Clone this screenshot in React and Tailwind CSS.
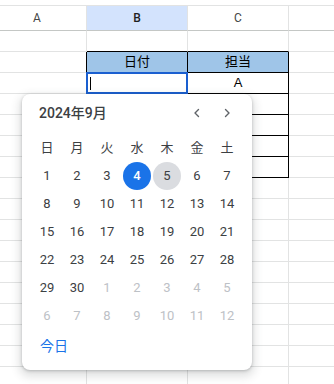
import React from 'react';

const ROWS = 17;
const weekdays = ['日', '月', '火', '水', '木', '金', '土'];
// September 2024, padded with Aug/Oct days
const days = [
  [1, 2, 3, 4, 5, 6, 7],
  [8, 9, 10, 11, 12, 13, 14],
  [15, 16, 17, 18, 19, 20, 21],
  [22, 23, 24, 25, 26, 27, 28],
  [29, 30, 1, 2, 3, 4, 5],
  [6, 7, 8, 9, 10, 11, 12],
];

function Chevron({ dir }) {
  return (
    <svg width="8" height="10" viewBox="0 0 8 10" fill="none">
      {dir === 'left' ? (
        <path d="M5.5 1.5 L2 5 L5.5 8.5" stroke="#5f6368" strokeWidth="1.4" strokeLinecap="round" strokeLinejoin="round" />
      ) : (
        <path d="M2.5 1.5 L6 5 L2.5 8.5" stroke="#5f6368" strokeWidth="1.4" strokeLinecap="round" strokeLinejoin="round" />
      )}
    </svg>
  );
}

function SheetRow({ r }) {
  const inTable = r >= 2 && r <= 7;
  const topEdge = r === 1;
  const tableB = inTable || topEdge;
  return (
    <div className="flex h-[21px]">
      <div className={`w-[87px] shrink-0 border-b border-r border-b-[#e2e3e3] ${inTable ? 'border-r-black' : 'border-r-[#e2e3e3]'}`} />
      <div
        className={`relative w-[101px] shrink-0 border-b border-r flex items-center justify-center ${tableB ? 'border-b-black' : 'border-b-[#e2e3e3]'} ${inTable ? 'border-r-black' : 'border-r-[#e2e3e3]'} ${r === 2 ? 'bg-[#9fc5e8]' : ''}`}
      >
        {r === 2 && <span>日付</span>}
        {r === 3 && (
          <>
            <div className="absolute -top-px -left-px w-[102px] h-[22px] border-2 border-[#1a5fd0]" />
            <div className="absolute left-[3px] top-[4px] w-px h-[13px] bg-black" />
          </>
        )}
      </div>
      <div
        className={`w-[101px] shrink-0 border-b border-r flex items-center justify-center ${tableB ? 'border-b-black' : 'border-b-[#e2e3e3]'} ${inTable ? 'border-r-black' : 'border-r-[#e2e3e3]'} ${r === 2 ? 'bg-[#9fc5e8]' : ''}`}
      >
        {r === 2 && <span>担当</span>}
        {r === 3 && <span>A</span>}
      </div>
      <div className="flex-1 border-b border-b-[#e2e3e3]" />
    </div>
  );
}

export default function App() {
  return (
    <div className="relative w-[334px] h-[384px] overflow-hidden bg-white text-[13px] text-black" style={{ fontFamily: '"Liberation Sans", "Noto Sans CJK JP", sans-serif' }}>
      {/* strip above column headers */}
      <div className="h-[6px] border-b border-[#e2e3e3]" />

      {/* column headers */}
      <div className="flex h-[25px] text-[12px] text-[#444746]" style={{ fontFamily: 'Roboto, "Noto Sans", sans-serif' }}>
        <div className="w-[87px] shrink-0 border-b border-r border-b-[#c4c7c5] border-r-[#e2e3e3] flex items-center justify-center pr-[12px]">A</div>
        <div className="w-[101px] shrink-0 border-b border-r border-b-[#c4c7c5] border-r-[#e2e3e3] bg-[#d3e3fd] flex items-center justify-center font-medium text-[#1f1f1f]">B</div>
        <div className="w-[101px] shrink-0 border-b border-r border-b-[#c4c7c5] border-r-[#e2e3e3] flex items-center justify-center">C</div>
        <div className="flex-1 border-b border-b-[#c4c7c5]" />
      </div>

      {Array.from({ length: ROWS }, (_, i) => (
        <SheetRow key={i} r={i + 1} />
      ))}

      {/* date picker popup */}
      <div
        className="absolute left-[22px] top-[94px] w-[230px] h-[276px] bg-white rounded-[8px] pt-[6px] pl-[10px] pr-[10px] shadow-[0_1px_3px_rgba(60,64,67,0.3),0_4px_8px_3px_rgba(60,64,67,0.15)] text-[#3c4043]"
        style={{ fontFamily: 'Roboto, "Noto Sans CJK JP", sans-serif' }}
      >
        <div className="flex items-center h-[26px]">
          <span className="pl-[7px] text-[14px] font-medium">2024年9月</span>
          <div className="ml-auto flex items-center">
            <span className="w-[30px] flex justify-center"><Chevron dir="left" /></span>
            <span className="w-[30px] flex justify-center"><Chevron dir="right" /></span>
          </div>
        </div>
        <div className="grid grid-cols-[repeat(7,30px)] h-[28px] mt-[8px] items-center text-[13px]">
          {weekdays.map((w) => (
            <div key={w} className="text-center">{w}</div>
          ))}
        </div>
        {days.map((week, wi) => (
          <div key={wi} className="grid grid-cols-[repeat(7,30px)] h-[28px] items-center text-[13px]">
            {week.map((d, di) => {
              const outside = (wi === 4 && di >= 2) || wi === 5;
              const today = wi === 0 && d === 4;
              const hover = wi === 0 && d === 5;
              return (
                <div key={di} className="flex justify-center">
                  <div
                    className={`w-[28px] h-[28px] rounded-full flex items-center justify-center ${today ? 'bg-[#1a73e8] text-white font-medium' : ''} ${hover ? 'bg-[#dadce0]' : ''} ${outside ? 'text-[#bdc1c6]' : ''}`}
                  >
                    {d}
                  </div>
                </div>
              );
            })}
          </div>
        ))}
        <div className="h-[24px] mt-[4px] flex items-center pl-[8px] text-[14px] text-[#1a73e8]">今日</div>
      </div>
    </div>
  );
}
